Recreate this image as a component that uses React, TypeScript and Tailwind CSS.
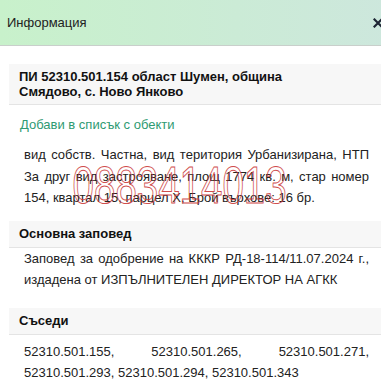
export default function App() {
  return (
    <div className="w-[381px] h-[391px] overflow-hidden bg-white font-['Liberation_Sans',Arial,sans-serif] text-[13px] text-[#222]">
      <div className="w-[393px]">
        {/* header */}
        <div className="h-[46px] flex items-center justify-between pl-[7px] pr-[10px] border-b border-[#c9cfcb] bg-gradient-to-r from-[#c8f1cb] to-[#cde7dd]">
          <span className="leading-[16px] text-[#222]">Информация</span>
          <svg width="10" height="10" viewBox="0 0 10 10" className="text-[#1d2433]">
            <path d="M1.5 1.5 L8.5 8.5 M8.5 1.5 L1.5 8.5" stroke="currentColor" strokeWidth="2.2" strokeLinecap="square" />
          </svg>
        </div>

        <div className="pl-[9px] pr-[9px]">
          <div className="mt-[18px] bg-[#f7f7f7] border-b border-[#e4e4e4] px-[10px] pt-[5px] pb-[5px] font-bold leading-[15px] text-[#111]">
            ПИ 52310.501.154 област Шумен, община
            <br />
            Смядово, с. Ново Янково
          </div>

          <div className="mt-[12px] px-[11px] leading-[16px] text-[#2e9a72]">Добави в списък с обекти</div>

          <div className="relative mt-[11px] px-[15px] leading-[21.5px] text-justify">
            вид собств. Частна, вид територия Урбанизирана, НТП За друг вид застрояване, площ 1774 кв. м, стар номер 154, квартал 15, парцел X, Брой върхове: 16 бр.
            <div className="absolute left-[46px] top-[15px] w-[250px] flex justify-center pointer-events-none">
              <span className="text-[52px] leading-[52px] scale-x-[0.74] text-transparent [-webkit-text-stroke:1px_#cc3b3b] opacity-90">
                0883414013
              </span>
            </div>
          </div>

          <div className="mt-[12px] bg-[#f7f7f7] border-b border-[#e4e4e4] px-[10px] py-[5px] font-bold leading-[16px] text-[#111]">
            Основна заповед
          </div>

          <div className="px-[15px] leading-[21.5px] text-justify">
            Заповед за одобрение на КККР РД-18-114/11.07.2024 г., издадена от ИЗПЪЛНИТЕЛЕН ДИРЕКТОР НА АГКК
          </div>

          <div className="mt-[17px] bg-[#f7f7f7] border-b border-[#e4e4e4] px-[10px] py-[5px] font-bold leading-[16px] text-[#111]">
            Съседи
          </div>

          <div className="mt-[6px] px-[15px] leading-[21.5px] text-justify">
            52310.501.155, 52310.501.265, 52310.501.271, 52310.501.293, 52310.501.294, 52310.501.343
          </div>
        </div>
      </div>
    </div>
  );
}
